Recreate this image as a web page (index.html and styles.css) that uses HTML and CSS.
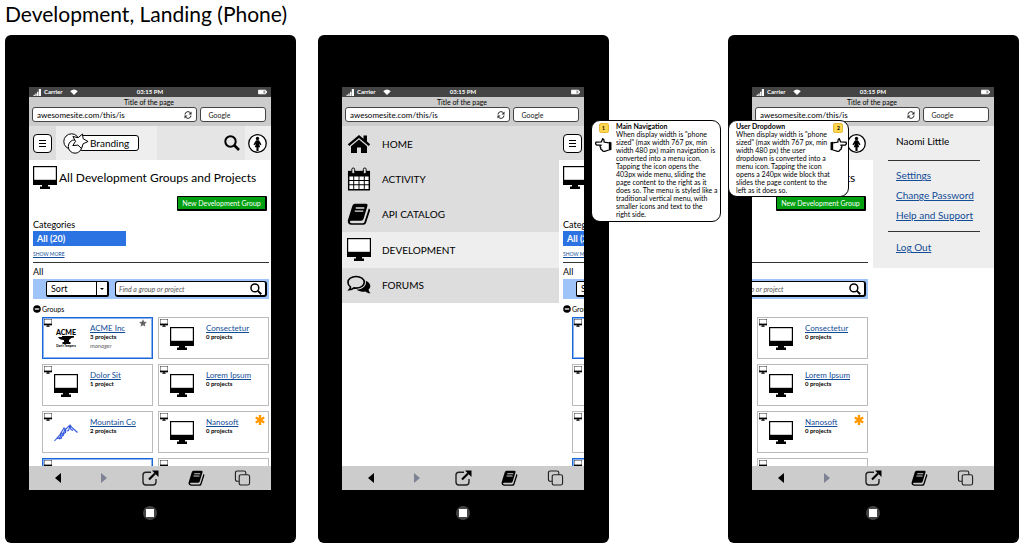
FILE: index.html
```html
<!DOCTYPE html>
<html lang="en">
<head>
<meta charset="utf-8">
<meta name="viewport" content="width=device-width, initial-scale=1">
<title>Development, Landing (Phone)</title>
<link rel="stylesheet" href="styles.css">
</head>
<body>
<svg class="sprite" aria-hidden="true">
  <symbol id="monitor" viewBox="0 0 24 24"><path d="M0 0h24v19H0z"/><path class="paper" d="M1.2 1.2h21.6v12.6H1.2z"/><path d="M9 19h6v1.6h2V23H7v-2.400h2z"/></symbol>
  <symbol id="home" viewBox="0 0 24 20"><path d="M12 1 0.800 10.300l1.500 1.700L12 4l9.700 8 1.500-1.700-3.200-2.700V1.500h-3.500v3.200z"/><path d="M12 5.600 4 12.200V19h6v-5.500h4V19h6v-6.800z"/></symbol>
  <symbol id="calendar" viewBox="0 0 24 25"><path d="M0.500 4h23v20.500H.5z"/><path class="paper" d="M2 10h4v3.500H2zM7 10h4.500v3.500H7zM12.500 10H17v3.500h-4.500zM18 10h4v3.500h-4zM2 14.500h4V18H2zM7 14.500h4.500V18H7zM12.500 14.500H17V18h-4.500zM18 14.500h4V18h-4zM2 19h4v4H2zM7 19h4.500v4H7zM12.500 19H17v4h-4.500zM18 19h4v4h-4z"/><rect x="4.500" y="1" width="3" height="6" rx="1.500" fill="#ddd" stroke="#000"/><rect x="16.500" y="1" width="3" height="6" rx="1.500" fill="#ddd" stroke="#000"/></symbol>
  <symbol id="book" viewBox="0 0 24 22"><path d="M7.500 0.800 19 .8q2 0 1.500 2L16.500 16q-.5 1.800-2.500 1.800H4.500q-2 0-1.500 1.400.4 1 2 1h10.500q1.500 0 2-1.500L21.800 5.500q1.700.5 1.200 2.200L19 20q-.6 1.800-2.500 1.800h-12Q.3 21.500.8 17.500L5.300 3Q6 1 7.500.8z"/><path d="M8.800 5h8.500M7.800 8.200h8.500" fill="none" stroke="#ddd" stroke-width="1.300"/></symbol>
  <symbol id="chat" viewBox="0 0 25 20"><path d="M19.500 5.500c4.500 1.500 6.500 6 3 9.200.1 1.500.8 2.600 2 3.800-2 .2-3.800-.5-5.300-1.800-3.500.8-7.200 0-9.200-1.900 6 .1 11-4 9.500-9.300z"/><path d="M9.500 1.200c4.800 0 8.500 2.600 8.500 6s-3.700 6-8.500 6l-2.200-.2c-1.500 1.300-3 1.900-5 2 .9-1 1.300-2 1.300-3C2 11 1 9.300 1 7.200c0-3.400 3.700-6 8.500-6z" fill="none" stroke="#000" stroke-width="1.700"/></symbol>
  <symbol id="search" viewBox="0 0 16 16"><circle cx="6.500" cy="6.500" r="5.200" fill="none" stroke="#000" stroke-width="2"/><path d="m10.500 10.500 4.500 4.500" stroke="#000" stroke-width="2.600"/></symbol>
  <symbol id="person" viewBox="0 0 18 18"><circle cx="9" cy="9" r="8.300" fill="#fff" stroke="#000" stroke-width="1.200"/><circle cx="9" cy="4.300" r="1.600"/><path d="M7.600 6h2.800l2.400 4-1 .6L10.500 9l1 3.500H10V16H8v-3.500H6.500l1-3.500-1.300 1.600-1-.6z"/></symbol>
  <symbol id="brand" viewBox="0 0 26 21"><circle cx="8.500" cy="8.500" r="7.700" fill="#fff" stroke="#000"/><circle cx="12" cy="13.500" r="6.700" fill="#fff" stroke="#000"/><path d="m19.500 1 .6 4.700 5 2.800-5 2.300-1.500 4.700-3.700-3.400-5.100.5 2.700-4.300-2.600-4.800 5.300 1.200z" fill="#fff" stroke="#000"/></symbol>
  <symbol id="signal" viewBox="0 0 9 8"><path d="M0 6.500h1.500V8H0zM2 5h1.500v3H2zM4 3h1.500v5H4zM6 0h2.500v8H6z" fill="#fff"/></symbol>
  <symbol id="wifi" viewBox="0 0 10 8"><path d="M0 3Q5-2 10 3L5 8z" fill="#fff"/></symbol>
  <symbol id="battery" viewBox="0 0 10 6"><path d="M.5 1h8v4h-8z" fill="#999" stroke="#fff"/><path d="M1 1h5v4H1zM9 2h1v2H9z" fill="#fff"/></symbol>
  <symbol id="reload" viewBox="0 0 8 8"><path d="M1 3.500A3 3 0 0 1 6.500 2M7 4.500A3 3 0 0 1 1.500 6" fill="none" stroke="#222"/><path d="M7.500.5v3h-3zM.5 7.500v-3h3z" fill="#222"/></symbol>
  <symbol id="back" viewBox="0 0 8 10"><path d="M7 0v10L1 5z"/></symbol>
  <symbol id="forward" viewBox="0 0 8 10"><path d="M1 0v10l6-5z" fill="#7d8294"/></symbol>
  <symbol id="share" viewBox="0 0 17 16"><path d="M9 2.200H4Q1 2.200 1 5v7q0 3 3 3h7q3 0 3-3V9" fill="none" stroke="#222" stroke-width="1.400"/><path d="m7 9.500 6-6" stroke="#000" stroke-width="2.200"/><path d="M10 .5h6.500V7z"/></symbol>
  <symbol id="tabs" viewBox="0 0 17 17"><path d="M5 12H3Q1 12 1 10V3q0-2 2-2h7q2 0 2 2v2" fill="none" stroke="#222" stroke-width="1.200"/><rect x="5" y="5" width="11" height="11" rx="2" fill="none" stroke="#222" stroke-width="1.200"/></symbol>
  <symbol id="minus" viewBox="0 0 8 8"><circle cx="4" cy="4" r="3.800"/><path d="M1.800 4h4.400" stroke="#fff" stroke-width="1.300"/></symbol>
  <symbol id="star" viewBox="0 0 10 10"><path d="m5 .3 1.400 3.100 3.400.4-2.500 2.300.7 3.400L5 7.800 2 9.500l.7-3.400L.2 3.800l3.400-.4z" fill="#666"/></symbol>
  <symbol id="asterisk" viewBox="0 0 10 10"><path d="M5 0v10M.8 2.500l8.400 5M.8 7.500l8.400-5" stroke="#ff9800" stroke-width="2.400"/></symbol>
  <symbol id="anvil" viewBox="0 0 16 8"><path d="M0 1h4V0h12v1.500q-3 0-4.500 2Q10.500 4.500 11 6h1.500v2h-8V6H6q.5-1.500-.5-2Q1.500 4 0 1z"/></symbol>
  <symbol id="mountain" viewBox="0 0 24 18"><path d="M.5 17 6 10.500 10 4l1.500 1.500L16 1l3 3.500 4.500 4M2 15l4-1.500 1-4 2.500-.5L11 5M5 15l2.500-1 .5-3 3.500-2.500V6M12.500 7l2-.5L16 2l1 3.500 2 1M8 12l2-1" fill="none" stroke="#3559dd" stroke-width="1.100"/></symbol>
  <symbol id="hand" viewBox="0 0 16 15"><path d="M13 5.500 8.500 4.700Q8.800 1.800 7.300 1.500L6 4.500l-5 .3Q0 6.500 1.500 7.500l4 .2Q4 9 5.500 10.200 5 11.700 6.500 12q.5 1.800 2.500 1.500l4-1.300" fill="#fff" stroke="#000" stroke-width="1.200"/><path d="m13 4.500 2.500.5v7.300l-2.500.4z"/></symbol>
</svg>

<template id="chrome">
  <div class="status"><span class="carrier"><svg class="i-signal"><use href="#signal"/></svg>Carrier<svg class="i-wifi"><use href="#wifi"/></svg></span><span>03:15 PM</span><span class="power"><svg class="i-battery"><use href="#battery"/></svg></span></div>
  <div class="browser">
    <p class="tab-title">Title of the page</p>
    <div class="fields">
      <label class="field address"><input type="text" value="awesomesite.com/this/is" aria-label="Address"><svg class="i-8"><use href="#reload"/></svg></label>
      <label class="field engine"><input type="text" placeholder="Google" aria-label="Google search"></label>
    </div>
  </div>
</template>

<template id="toolbar">
  <div class="toolbar">
    <button aria-label="Back"><svg class="i-arrow"><use href="#back"/></svg></button>
    <button aria-label="Forward"><svg class="i-arrow"><use href="#forward"/></svg></button>
    <button aria-label="Share"><svg class="i-tool"><use href="#share"/></svg></button>
    <button aria-label="Bookmarks"><svg class="i-tool"><use href="#book"/></svg></button>
    <button aria-label="Tabs"><svg class="i-tool"><use href="#tabs"/></svg></button>
  </div>
</template>

<template id="page">
  <main class="page">
    <header class="header">
      <div class="header-menu"><button class="burger" aria-label="Menu"><i></i><i></i><i></i></button></div>
      <div class="header-brand"><svg class="i-brand"><use href="#brand"/></svg><span class="brand">Branding</span></div>
      <div class="header-search"><button aria-label="Search"><svg class="i-16"><use href="#search"/></svg></button></div>
      <div class="header-user"><button aria-label="User"><svg class="i-user"><use href="#person"/></svg></button></div>
    </header>
    <div class="content">
      <h2 class="heading"><svg class="i-24"><use href="#monitor"/></svg>All Development Groups and Projects</h2>
      <button class="create">New Development Group</button>
      <h3 class="label">Categories</h3>
      <a class="category" href="#all">All (20)</a>
      <a class="more" href="#more">SHOW MORE</a>
      <hr class="rule">
      <h3 class="label">All</h3>
      <div class="filter">
        <label class="sort"><select aria-label="Sort"><option>Sort</option></select><span class="caret"></span></label>
        <label class="find"><input type="text" placeholder="Find a group or project" aria-label="Find a group or project"><svg class="i-12"><use href="#search"/></svg></label>
      </div>
      <h4 class="groups"><svg class="i-8"><use href="#minus"/></svg>Groups</h4>
      <div class="cards">
        <article class="card card-own"><svg class="i-8"><use href="#monitor"/></svg><div class="acme">ACME<svg class="i-anvil"><use href="#anvil"/></svg><small>Don't Tempera</small></div><div class="info"><a href="#acme">ACME Inc</a><p>3 projects</p><p class="role">manager</p></div><svg class="i-8"><use href="#star"/></svg></article>
        <article class="card"><svg class="i-8"><use href="#monitor"/></svg><svg class="logo"><use href="#monitor"/></svg><div class="info"><a href="#consectetur">Consectetur</a><p>0 projects</p></div></article>
        <article class="card"><svg class="i-8"><use href="#monitor"/></svg><svg class="logo"><use href="#monitor"/></svg><div class="info"><a href="#dolor">Dolor Sit</a><p>1 project</p></div></article>
        <article class="card"><svg class="i-8"><use href="#monitor"/></svg><svg class="logo"><use href="#monitor"/></svg><div class="info"><a href="#lorem">Lorem Ipsum</a><p>0 projects</p></div></article>
        <article class="card"><svg class="i-8"><use href="#monitor"/></svg><svg class="logo"><use href="#mountain"/></svg><div class="info"><a href="#mountain-co">Mountain Co</a><p>2 projects</p></div></article>
        <article class="card"><svg class="i-8"><use href="#monitor"/></svg><svg class="logo"><use href="#monitor"/></svg><div class="info"><a href="#nanosoft">Nanosoft</a><p>0 projects</p></div><svg class="i-flag"><use href="#asterisk"/></svg></article>
        <article class="card card-own"><svg class="i-8"><use href="#monitor"/></svg></article>
        <article class="card"><svg class="i-8"><use href="#monitor"/></svg></article>
      </div>
    </div>
  </main>
</template>

<h1 class="title">Development, Landing (Phone)</h1>
<div class="phones">
  <section class="phone">
    <div class="screen">
      <div data-use="chrome"></div>
      <div class="view"><div data-use="page"></div></div>
      <div data-use="toolbar"></div>
    </div>
    <button class="home-key" aria-label="Home"><i></i></button>
  </section>

  <section class="phone">
    <div class="screen">
      <div data-use="chrome"></div>
      <div class="view">
        <nav class="menu">
          <a href="#home"><svg class="i-24"><use href="#home"/></svg>HOME</a>
          <a href="#activity"><svg class="i-24"><use href="#calendar"/></svg>ACTIVITY</a>
          <a href="#api"><svg class="i-24"><use href="#book"/></svg>API CATALOG</a>
          <a class="current" href="#development"><svg class="i-24"><use href="#monitor"/></svg>DEVELOPMENT</a>
          <a href="#forums"><svg class="i-24"><use href="#chat"/></svg>FORUMS</a>
        </nav>
        <div data-use="page"></div>
      </div>
      <div data-use="toolbar"></div>
    </div>
    <button class="home-key" aria-label="Home"><i></i></button>
    <aside class="note note-nav">
      <div class="mark"><b>1</b><svg class="i-hand"><use href="#hand"/></svg></div>
      <div><strong>Main Navigation</strong><br>When display width is "phone<br>sized" (max width 767 px, min<br>width 480 px) main navigation is<br>converted into a menu icon.<br>Tapping the icon opens the<br>403px wide menu, sliding the<br>page content to the right as it<br>does so. The menu is styled like a<br>traditional vertical menu, with<br>smaller icons and text to the<br>right side.</div>
    </aside>
  </section>

  <section class="phone phone-user">
    <div class="screen">
      <div data-use="chrome"></div>
      <div class="view view-end">
        <div data-use="page"></div>
        <nav class="panel">
          <p>Naomi Little</p>
          <hr class="rule">
          <a href="#settings">Settings</a>
          <a href="#password">Change Password</a>
          <a href="#help">Help and Support</a>
          <hr class="rule">
          <a href="#logout">Log Out</a>
        </nav>
      </div>
      <div data-use="toolbar"></div>
    </div>
    <button class="home-key" aria-label="Home"><i></i></button>
    <aside class="note note-user">
      <div><strong>User Dropdown</strong><br>When display width is "phone<br>sized" (max width 767 px, min<br>width 480 px) the user<br>dropdown is converted into a<br>menu icon. Tapping the icon<br>opens a 240px wide block that<br>slides the page content to the<br>left as it does so.</div>
      <div class="mark"><b>2</b><svg class="i-hand flip"><use href="#hand"/></svg></div>
    </aside>
  </section>
</div>
<script src="app.js"></script>
</body>
</html>
```
FILE: styles.css
```css
* { box-sizing: border-box; }
body { margin: 0; background: #fff; color: #000; font-family: Lato, "Open Sans", sans-serif; font-size: 7px; line-height: 8px; }
h1, h2, h3, h4, p { margin: 0; font-weight: 400; }
button, input, select { margin: 0; padding: 0; border: 0; background: none; color: inherit; font: inherit; }
button { display: flex; align-items: center; justify-content: center; }
input { min-width: 0; width: 100%; outline: 0; }
svg { display: block; flex: none; }
a { color: #114c97; text-underline-offset: 1px; }
.sprite { position: absolute; width: 0; height: 0; }
.paper { fill: #fff; }

.i-8 { width: 8px; height: 8px; }
.i-12 { width: 12px; height: 12px; }
.i-16 { width: 16px; height: 16px; }
.i-24 { width: 24px; height: 24px; }
.i-flag { width: 10px; height: 10px; margin-top: 2px; }
.i-signal { width: 9px; height: 7px; }
.i-wifi { width: 8px; height: 6px; margin-left: 6px; }
.i-battery { width: 9px; height: 6px; }
.i-arrow { width: 8px; height: 10px; }
.i-tool { width: 17px; height: 16px; }
.i-user { width: 19px; height: 19px; }
.i-brand { width: 26px; height: 21px; }
.i-hand { width: 17px; height: 16px; }
.flip { transform: scaleX(-1); }

.title { height: 35px; padding-left: 5px; font-size: 21px; line-height: 28px; }
.phones { display: flex; gap: 22px; padding: 0 5px 5px; }
.phone { position: relative; flex: 1 1 0; min-width: 0; padding: 52px 25px 23px 24px; border-radius: 6px; background: #000; }
.phone-user { margin-left: 97px; }
.screen { overflow: hidden; background: #fff; }
.home-key { width: 14px; height: 14px; margin: 16px auto 0; border-radius: 50%; background: #444; }
.home-key i { width: 8px; height: 8px; background: #fff; }

.status { display: grid; grid-template-columns: 1fr auto 1fr; align-items: center; height: 10px; padding: 0 4px; background: #444; color: #fff; font-size: 6px; font-weight: 700; }
.carrier { display: flex; align-items: center; gap: 2px; }
.power { display: flex; justify-content: flex-end; }
.browser { padding: 1px 5px 4px 3px; height: 29px; background: #ccc; }
.tab-title { text-align: center; line-height: 9px; }
.fields { display: flex; gap: 3px; }
.field { display: flex; align-items: center; height: 15px; border: 1px solid #444; border-radius: 3px; background: #fff; padding: 0 4px; font-size: 8px; }
.address { flex: 1; }
.engine { flex: 0 0 28%; padding-left: 7px; font-size: 7px; }
.engine input::placeholder { color: #222; }

.view { display: flex; height: 340px; overflow: hidden; }
.view-end { justify-content: flex-end; }
.toolbar { display: grid; grid-template-columns: repeat(5, 1fr); height: 24px; padding: 0 6px; background: #ccc; }

.page { flex: 0 0 100%; }
.header { display: grid; grid-template-columns: 27px 101px 1fr 26px; height: 34px; background: #eee; }
.header > div { display: flex; align-items: center; }
.header-menu { background: #ddd; padding-left: 4px; }
.header-brand { padding-left: 7px; }
.header .header-search { background: #e5e5e5; justify-content: flex-end; padding-right: 5px; }
.header-user { padding-left: 3px; }
.burger { flex-direction: column; gap: 1px; width: 19px; height: 19px; border: 1px solid #000; border-radius: 4px; background: #fff; }
.burger i { width: 7px; height: 1px; background: #000; }
.burger i + i { margin-top: 1px; }
.i-brand { position: relative; z-index: 1; }
.brand { flex: none; height: 16px; margin-left: -10px; padding: 0 9px 0 10px; border: 1px solid #000; border-radius: 3px; background: #fff; font-size: 10px; line-height: 14px; }

.content { padding: 0 2px 0 4px; }
.heading { display: flex; align-items: center; gap: 2px; height: 36px; font-size: 12px; white-space: nowrap; }
.create { width: 90px; height: 15px; margin-left: auto; margin-right: 2px; border: 1px solid #000; border-right-width: 2px; border-bottom-width: 2px; border-radius: 1px; background: #00a010; color: #fff; white-space: nowrap; }
.label { margin-top: 8px; font-size: 9px; line-height: 12px; }
.category { display: block; width: 93px; height: 15px; padding-left: 4px; background: #2b73e3; color: #fff; font-size: 9px; font-weight: 700; line-height: 15px; text-decoration: none; }
.more { display: block; margin-top: 4px; font-size: 5px; }
.rule { height: 1px; margin: 4px 0 0; border: 0; background: #333; }
.rule + .label { margin-top: 3px; }
.filter { display: flex; gap: 6px; height: 20px; margin-top: 1px; padding: 2px 2px 2px 13px; background: #9ec4fa; }
.sort { display: flex; width: 63px; height: 16px; border: 1px solid #000; border-right-width: 2px; border-bottom-width: 2px; border-radius: 2px; background: #fff; font-size: 9px; }
.sort select { flex: 1; appearance: none; padding-left: 4px; }
.caret { display: flex; align-items: center; justify-content: center; width: 11px; border-left: 1px solid #000; }
.caret::before { content: ""; border: 2px solid transparent; border-top-color: #000; border-bottom: 0; }
.find { display: flex; flex: 1; align-items: center; padding: 0 3px; border: 1px solid #000; border-right-width: 2px; border-bottom-width: 2px; border-radius: 3px; background: #fff; }
.find input { font-style: italic; }
.find input::placeholder { color: #555; }
.groups { display: flex; align-items: center; gap: 1px; margin: 6px 0 4px; }

.cards { display: grid; grid-template-columns: 1fr 1fr; gap: 5px; margin-left: 9px; }
.card { display: grid; grid-template-columns: 10px 24px 1fr 12px; align-items: start; height: 42px; padding: 1px; border: 1px solid #bbb; }
.card-own { border-color: #1b66d8; outline: 1px solid #8ab4f0; outline-offset: -2px; }
.logo { width: 24px; height: 24px; margin-top: 8px; }
.info { padding: 5px 0 0 12px; white-space: nowrap; }
.info a { display: block; font-size: 8px; }
.info p { margin-top: 1px; line-height: 8px; font-size: 6px; font-weight: 700; }
.info .role { color: #666; font-style: italic; font-weight: 400; }
.acme { margin-top: 9px; text-align: center; font-size: 7px; line-height: 8px; font-weight: 900; }
.acme small { display: block; font-size: 3px; line-height: 4px; white-space: nowrap; }
.i-anvil { width: 16px; height: 8px; margin: 0 auto; }

.menu { display: grid; grid-auto-rows: 1fr; flex: none; width: 217px; height: 177px; background: #ddd; }
.menu a { display: flex; align-items: center; gap: 11px; padding-left: 5px; color: #000; font-size: 10px; text-decoration: none; }
.menu .current { background: #eee; }

.panel { display: flex; flex-direction: column; flex: none; width: 124px; height: 142px; padding: 8px 14px 0 26px; background: linear-gradient(#fff, #fff) 0 34px / 3px 100% no-repeat #eee; font-size: 10px; line-height: 15px; white-space: nowrap; }
.panel a { margin-top: 5px; }
.panel .rule { margin: 11px 0 3px -8px; }
.panel a + .rule { margin: 8px 0 4px -8px; }
.panel .rule + a { margin-top: 4px; }

.note { position: absolute; z-index: 2; top: 85px; display: flex; border: 1px solid #000; border-radius: 9px; background: #fff; white-space: nowrap; }
.note-nav { left: 273px; width: 130px; gap: 4px; padding: 1px 3px 3px; }
.note-user { left: 0; width: 121px; justify-content: space-between; padding: 1px 3px 2px 7px; }
.mark { display: flex; flex-direction: column; align-items: center; gap: 4px; padding-top: 1px; }
.mark b { width: 10px; border: 1px solid #eeb93a; border-radius: 2px; background: #ffd84f; font-size: 5px; text-align: center; }
```
FILE: app.js
```js
document.querySelectorAll("[data-use]").forEach((slot) => {
  const template = document.getElementById(slot.dataset.use);
  slot.replaceWith(template.content.cloneNode(true));
});
```
